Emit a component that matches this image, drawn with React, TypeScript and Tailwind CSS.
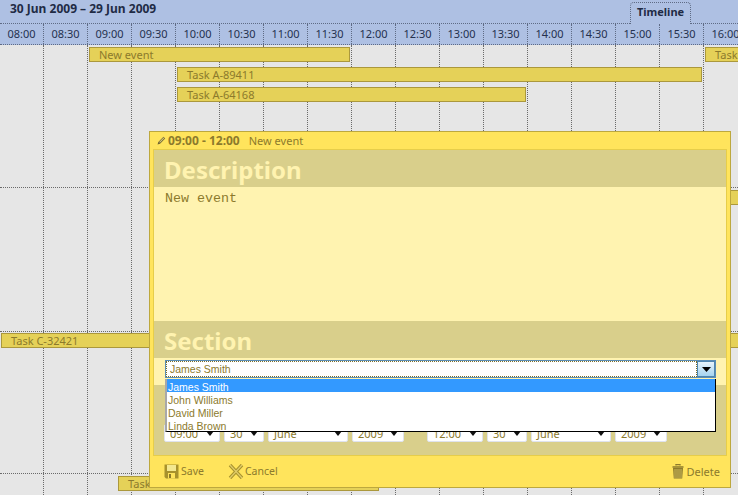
const times = ["08:00","08:30","09:00","09:30","10:00","10:30","11:00","11:30","12:00","12:30","13:00","13:30","14:00","14:30","15:00","15:30","16:00"];

const bars = [
  { label: "New event", left: 89, top: 2, width: 261 },
  { label: "Task A-89411", left: 177, top: 22, width: 525 },
  { label: "Task A-64168", left: 177, top: 42, width: 349 },
  { label: "Task", left: 705, top: 2, width: 80 },
  { label: "Task B-50213", left: 400, top: 145, width: 400 },
  { label: "Task C-32421", left: 1, top: 288, width: 800 },
  { label: "Task D-71820", left: 118, top: 431, width: 261 },
];

const people = ["James Smith", "John Williams", "David Miller", "Linda Brown"];

function TimeSelect({ value, width }: { value: string; width: string }) {
  return (
    <div className={`${width} h-[18px] bg-white border border-[#dfe3ee] rounded-[2px] flex items-center justify-between pl-[5px] pr-[5px]`}>
      <span>{value}</span>
      <svg width="8" height="5" viewBox="0 0 8 5"><path d="M0 0h8L4 5z" fill="#111" /></svg>
    </div>
  );
}

export default function App() {
  return (
    <div className="relative w-[738px] h-[495px] overflow-hidden bg-[#e6e6e6] text-[11px] leading-[13px] font-['Noto_Sans',sans-serif]">
      {/* header */}
      <div className="relative bg-[#aec0e3] text-[#25324f] h-[45px]">
        <div className="h-6 border-b border-dotted border-[#5f6b85] pl-[10px] pt-[2px] text-[12px] font-bold text-[#1f2b45]">30 Jun 2009 – 29 Jun 2009</div>
        <div className="flex h-[21px] border-b border-dotted border-[#5f6b85]">
          {times.map((t) => (
            <div key={t} className="w-11 shrink-0 border-r border-dotted border-[#5f6b85] text-center pt-[3px]">{t}</div>
          ))}
        </div>
        <div className="absolute left-[630px] top-[2px] w-[61px] h-[22px] bg-[#aec0e3] border border-b-0 border-dotted border-[#5f6b85] rounded-t-[4px] text-center pt-[2px] font-bold text-[#1f2b45]">Timeline</div>
      </div>

      {/* timeline body */}
      <div className="relative h-[450px]">
        <div className="absolute inset-0 flex">
          {times.map((t) => (
            <div key={t} className="w-11 shrink-0 border-r border-dotted border-[#6a6a6a]" />
          ))}
        </div>
        <div className="absolute inset-0 flex flex-col">
          <div className="h-[143px] shrink-0 border-b border-dotted border-[#6a6a6a]" />
          <div className="h-[144px] shrink-0 border-b border-dotted border-[#6a6a6a]" />
          <div className="h-[142px] shrink-0 border-b border-dotted border-[#6a6a6a]" />
        </div>
        {bars.map((b) => (
          <div
            key={b.label}
            className="absolute h-[15px] bg-[#e5d158] border border-[#ab983c] pl-[9px] text-[#8c7a2c] whitespace-nowrap overflow-hidden"
            style={{ left: b.left, top: b.top, width: b.width }}
          >
            {b.label}
          </div>
        ))}
      </div>

      {/* lightbox */}
      <div className="absolute left-[149px] top-[131px] w-[582px] h-[357px] bg-[#ffe45c] border border-[#bda83e] text-[#8c7a2c] flex flex-col">
        <div className="h-[17px] flex items-center pl-[7px] shrink-0">
          <svg width="9" height="9" viewBox="0 0 9 9" className="mr-[2px]">
            <path d="M0.5 8.5 L1.3 6 L6.5 0.8 L8.2 2.5 L3 7.7 Z" fill="#6e6330" />
            <path d="M2.2 6 L6.6 1.6 L7.3 2.3 L2.9 6.7 Z" fill="#d8c97a" />
          </svg>
          <span className="font-bold text-[12px]">09:00 - 12:00</span>
          <span className="ml-[9px]">New event</span>
        </div>

        <div className="mx-[3px] h-[307px] shrink-0 border border-[#e6cd4a] bg-[#d9cf8b] flex flex-col">
          <div className="h-[37px] shrink-0 pl-[10px] pt-[4px] text-[24px] leading-[31px] font-bold text-[#fff3b0]">Description</div>
          <div className="h-[134px] shrink-0 bg-[#fff3b0] pl-[11px] pt-[4px] font-['Liberation_Mono',monospace] text-[13.33px] leading-[15px]">New event</div>
          <div className="h-[37px] shrink-0 pl-[10px] pt-[4px] text-[24px] leading-[31px] font-bold text-[#fff3b0]">Section</div>

          <div className="relative h-[27px] shrink-0 bg-[#fff3b0] pl-[11px] pr-[10px] pt-[2px]">
            <div className="h-[18px] bg-white border border-[#5b8db5] flex font-['Liberation_Sans',sans-serif] text-[10.5px]">
              <div className="flex-1 border border-dotted border-[#7d6f2a] pl-[3px] pt-[1px] flex items-center">James Smith</div>
              <div className="w-[18px] shrink-0 border border-[#4f86b0] bg-gradient-to-b from-[#e6f3fb] to-[#a5d4f0] flex items-center justify-center">
                <svg width="9" height="5" viewBox="0 0 9 5"><path d="M0 0h9L4.5 5z" fill="#000" /></svg>
              </div>
            </div>
            {/* open list */}
            <div className="absolute z-10 left-[11px] top-[21px] w-[551px] h-[53px] bg-white border-l-2 border-l-[#a8a8a8] border-r border-r-black border-b border-b-black font-['Liberation_Sans',sans-serif] text-[10.5px]">
              {people.map((p, i) => (
                <div key={p} className={`h-[13px] pl-[1px] pt-[2px] ${i === 0 ? "bg-[#3399ff] text-white" : ""}`}>{p}</div>
              ))}
            </div>
          </div>

          <div className="flex-1 flex pl-[10px] pt-[39px]">
            <div className="flex gap-[4px]">
              <TimeSelect value="09:00" width="w-[56px]" />
              <TimeSelect value="30" width="w-[40px]" />
              <TimeSelect value="June" width="w-[80px]" />
              <TimeSelect value="2009" width="w-[52px]" />
            </div>
            <div className="flex gap-[4px] ml-[23px]">
              <TimeSelect value="12:00" width="w-[56px]" />
              <TimeSelect value="30" width="w-[40px]" />
              <TimeSelect value="June" width="w-[80px]" />
              <TimeSelect value="2009" width="w-[52px]" />
            </div>
          </div>
        </div>

        {/* buttons */}
        <div className="flex-1 flex items-center pl-[14px] pr-[10px] pb-[1px]">
          <svg width="15" height="15" viewBox="0 0 15 15" className="mr-[2px]">
            <path d="M0.5 0.5H14.5V14.5H2L0.5 13Z" fill="#a8922c" />
            <rect x="3" y="1" width="9" height="6" fill="#f3e88f" />
            <rect x="4" y="9" width="7" height="5.5" fill="#ffe45c" />
            <rect x="5" y="10" width="2" height="4" fill="#8c7a2c" />
          </svg>
          <span className="text-[10.5px]">Save</span>
          <svg width="16" height="15" viewBox="0 0 16 15" className="ml-[24px] mr-[1px]">
            <path d="M2 1 L14 14 M14 1 L2 14" stroke="#a8922c" strokeWidth="3.4" />
            <path d="M2 1 L14 14 M14 1 L2 14" stroke="#e0cd6a" strokeWidth="1.2" />
          </svg>
          <span className="text-[10.5px]">Cancel</span>
          <svg width="14" height="15" viewBox="0 0 14 15" className="ml-auto mr-[2px]">
            <path d="M5 1.5V0.5H9V1.5M1.5 3H12.5" stroke="#8c7a2c" strokeWidth="1.4" fill="none" />
            <path d="M2 4H12L11.2 14.5H2.8Z" fill="#8c7a2c" />
            <path d="M4 5V14M6 5V14M8 5V14M10 5V14" stroke="#e0cd6a" strokeWidth="0.8" />
          </svg>
          <span>Delete</span>
        </div>
      </div>
    </div>
  );
}
